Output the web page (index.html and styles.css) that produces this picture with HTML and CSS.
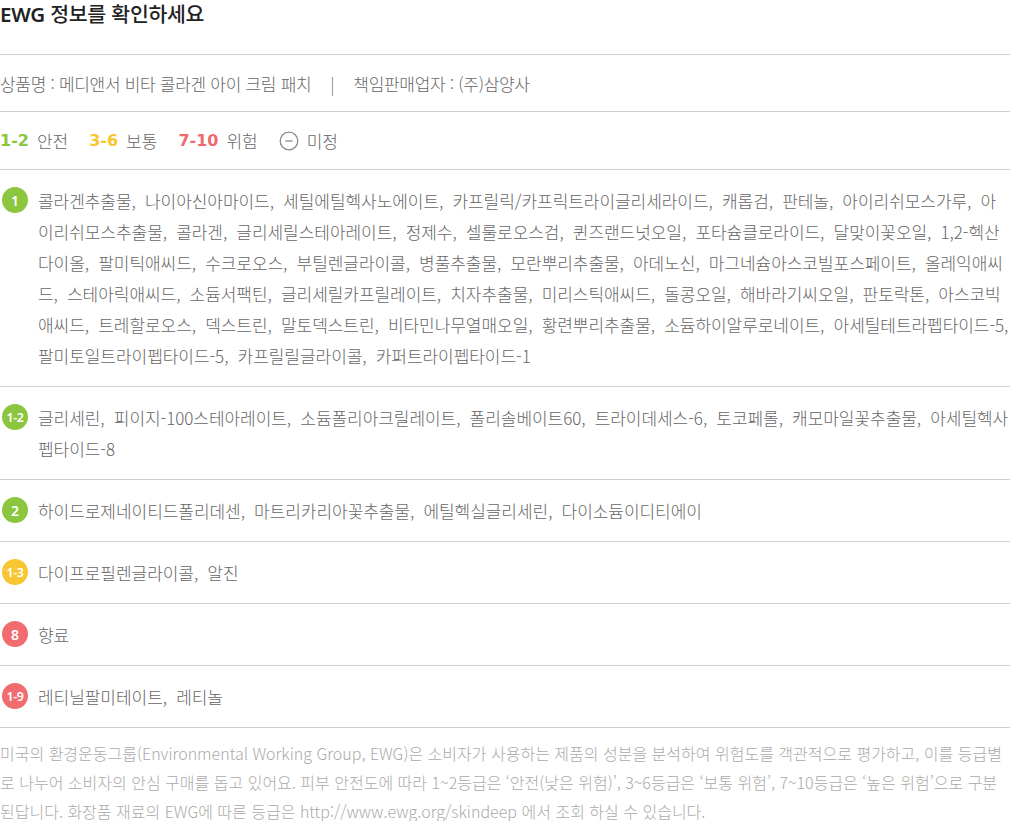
FILE: index.html
```html
<!DOCTYPE html>
<html lang="ko">
<head>
<meta charset="utf-8">
<link rel="stylesheet" href="styles.css">
</head>
<body>
<section class="ewg">
  <h2 class="title"><span class="latin">EWG</span> 정보를 확인하세요</h2>
  <div class="row product">상품명 : 메디앤서 비타 콜라겐 아이 크림 패치<span class="sep">|</span>책임판매업자 : (주)삼양사</div>
  <div class="row legend">
    <span class="lg"><b class="num green">1-2</b> 안전</span>
    <span class="lg"><b class="num yellow">3-6</b> 보통</span>
    <span class="lg"><b class="num red">7-10</b> 위험</span>
    <span class="lg"><svg class="minus" width="20" height="20" viewBox="0 0 20 20"><circle cx="10" cy="10" r="8.8" fill="none" stroke="#8a8a8a" stroke-width="1.3"/><line x1="6.5" y1="10" x2="13.5" y2="10" stroke="#8a8a8a" stroke-width="1.3"/></svg> 미정</span>
  </div>
  <div class="row grade">
    <span class="badge green">1</span>
    <p class="ing">콜라겐추출물, 나이아신아마이드, 세틸에틸헥사노에이트, 카프릴릭/카프릭트라이글리세라이드, 캐롭검, 판테놀, 아이리쉬모스가루, 아이리쉬모스추출물, 콜라겐, 글리세릴스테아레이트, 정제수, 셀룰로오스검, 퀸즈랜드넛오일, 포타슘클로라이드, 달맞이꽃오일, 1,2-헥산다이올, 팔미틱애씨드, 수크로오스, 부틸렌글라이콜, 병풀추출물, 모란뿌리추출물, 아데노신, 마그네슘아스코빌포스페이트, 올레익애씨드, 스테아릭애씨드, 소듐서팩틴, 글리세릴카프릴레이트, 치자추출물, 미리스틱애씨드, 돌콩오일, 해바라기씨오일, 판토락톤, 아스코빅애씨드, 트레할로오스, 덱스트린, 말토덱스트린, 비타민나무열매오일, 황련뿌리추출물, 소듐하이알루로네이트, 아세틸테트라펩타이드-5, 팔미토일트라이펩타이드-5, 카프릴릴글라이콜, 카퍼트라이펩타이드-1</p>
  </div>
  <div class="row grade">
    <span class="badge green small">1-2</span>
    <p class="ing">글리세린, 피이지-100스테아레이트, 소듐폴리아크릴레이트, 폴리솔베이트60, 트라이데세스-6, 토코페롤, 캐모마일꽃추출물, 아세틸헥사펩타이드-8</p>
  </div>
  <div class="row grade">
    <span class="badge green">2</span>
    <p class="ing">하이드로제네이티드폴리데센, 마트리카리아꽃추출물, 에틸헥실글리세린, 다이소듐이디티에이</p>
  </div>
  <div class="row grade">
    <span class="badge yellow small">1-3</span>
    <p class="ing">다이프로필렌글라이콜, 알진</p>
  </div>
  <div class="row grade">
    <span class="badge red">8</span>
    <p class="ing">향료</p>
  </div>
  <div class="row grade">
    <span class="badge red small">1-9</span>
    <p class="ing">레티닐팔미테이트, 레티놀</p>
  </div>
  <p class="note">미국의 환경운동그룹(Environmental Working Group, EWG)은 소비자가 사용하는 제품의 성분을 분석하여 위험도를 객관적으로 평가하고, 이를 등급별로 나누어 소비자의 안심 구매를 돕고 있어요. 피부 안전도에 따라 1~2등급은 ‘안전(낮은 위험)’, 3~6등급은 ‘보통 위험’, 7~10등급은 ‘높은 위험’으로 구분된답니다. 화장품 재료의 EWG에 따른 등급은 http://www.ewg.org/skindeep 에서 조회 하실 수 있습니다.</p>
</section>
</body>
</html>
```

FILE: styles.css
```css
html, body {
  margin: 0;
  padding: 0;
  background: #fff;
}
body {
  font-family: "Noto Sans CJK KR", "Noto Sans", sans-serif;
  color: #666;
}
.ewg {
  width: 1010px;
}
.title {
  margin: 0;
  height: 55px;
  box-sizing: border-box;
  padding-top: 1px;
  font-size: 20.5px;
  line-height: 24px;
  font-weight: 500;
  color: #222;
  border-bottom: 1px solid #d0d0d0;
  letter-spacing: -0.3px;
}
.latin {
  font-family: "Noto Sans", sans-serif;
  font-weight: 600;
}
.row {
  border-bottom: 1px solid #d0d0d0;
}
.product {
  height: 56px;
  display: flex;
  align-items: center;
  font-size: 17px;
  font-weight: 300;
  color: #666;
  letter-spacing: -0.3px;
  white-space: pre;
}
.sep {
  margin: 0 19px 0 19px;
  color: #777;
}
.legend {
  height: 57px;
  display: flex;
  align-items: center;
  gap: 21px;
  font-size: 17px;
  font-weight: 300;
  color: #666;
}
.lg {
  display: flex;
  align-items: center;
  gap: 8px;
}
.num {
  font-family: "DejaVu Sans", sans-serif;
  font-weight: 700;
  font-size: 16px;
}
.num.green { color: #8cc63f; }
.num.yellow { color: #f7c630; }
.num.red { color: #ef6a6e; }
.minus { display: block; }
.grade {
  display: flex;
  align-items: flex-start;
  padding: 15px 0;
}
.badge {
  flex: none;
  width: 26px;
  height: 26px;
  border-radius: 50%;
  margin: 2px 10px 0 2px;
  display: flex;
  align-items: center;
  justify-content: center;
  color: #fff;
  font-family: "Noto Sans", sans-serif;
  font-weight: 600;
  font-size: 14px;
}
.badge.small {
  font-size: 12.5px;
  letter-spacing: -0.5px;
}
.badge.green { background: #8cc63f; }
.badge.yellow { background: #f8c630; }
.badge.red { background: #f16c6f; }
.ing {
  margin: 0;
  font-size: 17px;
  font-weight: 300;
  line-height: 31px;
  color: #666;
  letter-spacing: -0.05px;
  word-spacing: 4.5px;
}
.note {
  margin: 0;
  padding-top: 11px;
  font-size: 16px;
  font-weight: 300;
  line-height: 29px;
  color: #aaa;
  letter-spacing: 0;
}
```
